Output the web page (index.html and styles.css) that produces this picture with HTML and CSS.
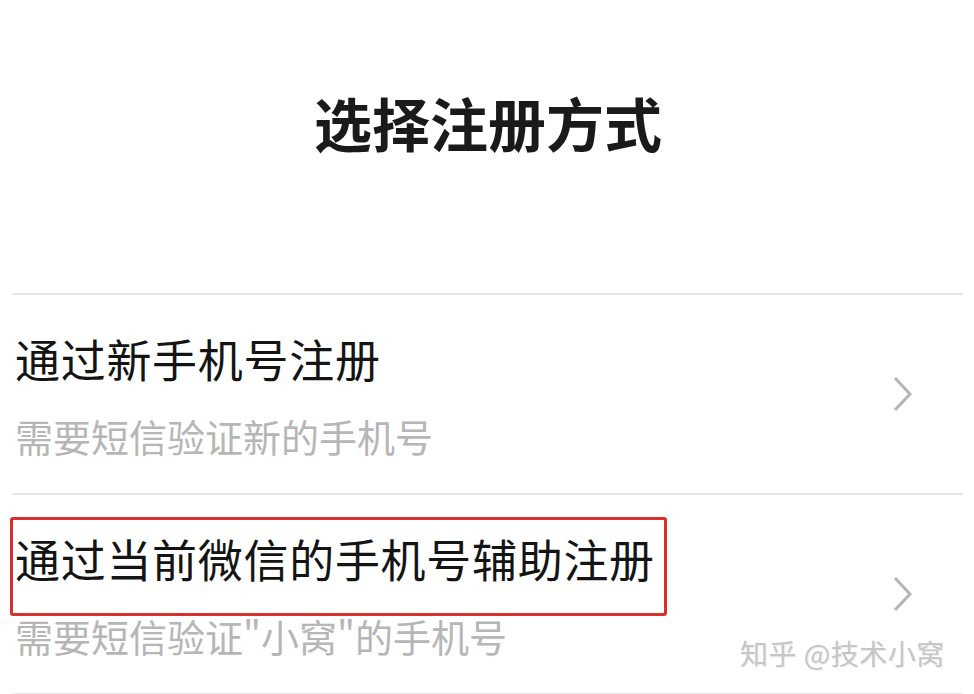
FILE: index.html
```html
<!DOCTYPE html>
<html lang="zh">
<head>
    <meta charset="UTF-8">
    <meta name="viewport" content="width=device-width, initial-scale=1.0">
    <title>选择注册方式</title>
    <link rel="stylesheet" href="styles.css">
</head>
<body>
    <div class="page">
        <div class="header">
            <h1>选择注册方式</h1>
        </div>

        <div class="list">
            <div class="item">
                <div class="item-text">
                    <div class="item-title">通过新手机号注册</div>
                    <div class="item-desc">需要短信验证新的手机号</div>
                </div>
                <svg class="arrow" width="20" height="36" viewBox="0 0 20 36">
                    <path d="M2 2 L17 18 L2 34" fill="none" stroke="#b4b4b4" stroke-width="3" />
                </svg>
            </div>

            <div class="item">
                <div class="item-text">
                    <div class="item-title">通过当前微信的手机号辅助注册</div>
                    <div class="item-desc">需要短信验证"小窝"的手机号</div>
                </div>
                <svg class="arrow" width="20" height="36" viewBox="0 0 20 36">
                    <path d="M2 2 L17 18 L2 34" fill="none" stroke="#b4b4b4" stroke-width="3" />
                </svg>
                <!-- 标注框 -->
                <div class="mark-box"></div>
            </div>
        </div>

        <div class="watermark">知乎 @技术小窝</div>
    </div>
</body>
</html>
```

FILE: styles.css
```css
body {
    margin: 0;
    background-color: #fff;
    font-family: "Noto Sans CJK SC", "Noto Sans", sans-serif;
}
.page {
    position: relative;
    width: 974px;
    height: 694px;
    overflow: hidden;
}
.header {
    height: 293px;
    box-sizing: border-box;
    padding-top: 87px;
}
h1 {
    margin: 0;
    text-align: center;
    font-size: 58px;
    line-height: 70px;
    font-weight: 700;
    color: #1a1a1a;
    padding-left: 2px;
}
.list {
    margin: 0 11px 0 12px;
    border-top: 2px solid #e6e6e6;
}
.item {
    position: relative;
    display: flex;
    align-items: center;
    justify-content: space-between;
    height: 198px;
    padding: 0 50px 0 3px;
    border-bottom: 2px solid #e6e6e6;
}
.item-text {
    padding-top: 6px;
}
.item-title {
    font-size: 45px;
    line-height: 54px;
    color: #141414;
    letter-spacing: 0.7px;
}
.item-desc {
    margin-top: 23px;
    font-size: 38px;
    line-height: 54px;
    color: #b6b6b6;
}
.arrow {
    display: block;
}
.mark-box {
    position: absolute;
    left: -2px;
    top: 22px;
    width: 657px;
    height: 99px;
    box-sizing: border-box;
    border: 3.5px solid #d8302a;
    border-radius: 3px;
}
.watermark {
    position: absolute;
    left: 740px;
    top: 634px;
    font-size: 28px;
    line-height: 38px;
    letter-spacing: 0.5px;
    color: #c6c6c6;
    text-shadow: 1px 1px 1px rgba(0, 0, 0, 0.08);
}
```
